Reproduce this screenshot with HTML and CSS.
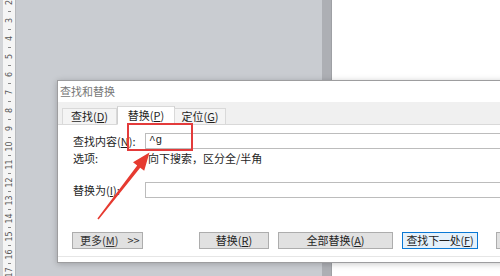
FILE: index.html
```html
<!DOCTYPE html>
<html lang="zh">
<head>
<meta charset="utf-8">
<link rel="stylesheet" href="styles.css">
</head>
<body>
<div class="screen">
  <div class="ruler-edge"></div>
  <div class="ruler">
    <div class="ruler-track">
      <span class="num">2</span><span class="tick"></span>
      <span class="num">3</span><span class="tick"></span>
      <span class="num">4</span><span class="tick"></span>
      <span class="num">5</span><span class="tick"></span>
      <span class="num">6</span><span class="tick"></span>
      <span class="num">7</span><span class="tick"></span>
      <span class="num">8</span><span class="tick"></span>
      <span class="num">9</span><span class="tick"></span>
      <span class="num">10</span><span class="tick"></span>
      <span class="num">11</span><span class="tick"></span>
      <span class="num">12</span><span class="tick"></span>
      <span class="num">13</span><span class="tick"></span>
      <span class="num">14</span><span class="tick"></span>
      <span class="num">15</span><span class="tick"></span>
      <span class="num">16</span><span class="tick"></span>
      <span class="num">17</span><span class="tick"></span>
    </div>
  </div>
  <div class="workspace"></div>
  <div class="page-shadow"></div>
  <div class="page"></div>

  <div class="dialog">
    <div class="title">查找和替换</div>
    <div class="tabstrip">
      <div class="tab tab-find">查找(<u>D</u>)</div>
      <div class="tab tab-active tab-replace">替换(<u>P</u>)</div>
      <div class="tab tab-goto">定位(<u>G</u>)</div>
    </div>
    <div class="panel">
      <div class="row row-find">
        <span class="label">查找内容(<u>N</u>):</span>
        <div class="input">^g</div>
      </div>
      <div class="row row-options">
        <span class="label">选项:</span>
        <span class="value">向下搜索，区分全/半角</span>
      </div>
      <div class="row row-replace">
        <span class="label">替换为(<u>I</u>):</span>
        <div class="input"></div>
      </div>
      <div class="buttons">
        <div class="btn btn-more"><span>更多(<u>M</u>)</span><span>&gt;&gt;</span></div>
        <div class="btn btn-replace">替换(<u>R</u>)</div>
        <div class="btn btn-all">全部替换(<u>A</u>)</div>
        <div class="btn btn-next">查找下一处(<u>F</u>)</div>
        <div class="btn btn-cancel"></div>
      </div>
    </div>
  </div>

  <div class="highlight"></div>
  <svg class="arrow" width="500" height="276" viewBox="0 0 500 276">
    <polygon points="97.4,218.6 137.2,165.4 133,162.2 149.5,152.5 144.2,170.8 140.2,167.7 98.6,219.4" fill="#e63a30"/>
  </svg>
</div>
</body>
</html>
```
FILE: styles.css
```css
html, body {
  margin: 0;
  padding: 0;
}

.screen {
  position: relative;
  width: 500px;
  height: 276px;
  display: flex;
  overflow: hidden;
  background: #c9ccd1;
  font-family: "Noto Sans CJK SC", "Liberation Sans", sans-serif;
}

.ruler-edge {
  width: 3px;
  flex-shrink: 0;
  background: #d3d5d8;
}

.ruler {
  width: 12px;
  flex-shrink: 0;
  background: #f5f5f5;
  border-right: 1px solid #b7b9bd;
  overflow: hidden;
}

.ruler-track {
  display: flex;
  flex-direction: column;
  margin-top: -2.5px;
}

.ruler-track span {
  height: 9px;
  flex-shrink: 0;
  display: flex;
  align-items: center;
  justify-content: center;
}

.ruler-track .num {
  font-family: "DejaVu Sans", sans-serif;
  font-size: 8px;
  line-height: 9px;
  color: #555555;
  transform: rotate(-90deg);
  white-space: nowrap;
}

.ruler-track .tick::before {
  content: "";
  display: block;
  width: 3px;
  height: 1px;
  background: #8a8a8a;
}

.workspace {
  width: 306px;
  flex-shrink: 0;
}

.page-shadow {
  width: 9px;
  flex-shrink: 0;
  background: #adafb4;
}

.page {
  flex: 1;
  background: #ffffff;
  border-left: 1px solid #9ea0a4;
}

/* dialog window */
.dialog {
  position: absolute;
  left: 57px;
  top: 80px;
  width: 470px;
  height: 183px;
  box-sizing: border-box;
  border: 1px solid #9d9d9f;
  background: #ffffff;
  box-shadow: 0 1px 6px rgba(0, 0, 0, 0.22);
  display: flex;
  flex-direction: column;
  font-size: 11px;
  color: #1f1f1f;
}

.title {
  height: 21px;
  line-height: 21px;
  padding-left: 2px;
  color: #777777;
  flex-shrink: 0;
}

.tabstrip {
  height: 23px;
  box-sizing: border-box;
  flex-shrink: 0;
  display: flex;
  align-items: flex-end;
  padding-left: 4px;
  background: #f0f0f0;
  border-bottom: 1px solid #d9d9d9;
}

.tab {
  box-sizing: border-box;
  height: 16px;
  line-height: 14px;
  text-align: center;
  border: 1px solid #d9d9d9;
  border-bottom: none;
  background: #f4f4f4;
  white-space: nowrap;
}

.tab-find { width: 55px; }
.tab-replace { width: 58px; }
.tab-goto { width: 52px; margin-left: -1px; }

.tab-active {
  height: 19px;
  line-height: 17px;
  margin-bottom: -1px;
  background: #ffffff;
  border-bottom: 1px solid #ffffff;
  border-left-color: #cfcfcf;
  border-right-color: #cfcfcf;
}

.panel {
  height: 132px;
  box-sizing: border-box;
  flex-shrink: 0;
  padding-left: 15px;
  border-bottom: 1px solid #e6e6e6;
  display: flex;
  flex-direction: column;
}

.row {
  display: flex;
  align-items: center;
}

.label {
  width: 72px;
  flex-shrink: 0;
  white-space: nowrap;
}

.row-find {
  margin-top: 8px;
  height: 16px;
}

.row-options {
  margin-top: 2px;
  height: 14px;
}

.row-options .value {
  padding-left: 3px;
  white-space: nowrap;
}

.row-replace {
  margin-top: 17px;
  height: 16px;
}

.input {
  flex: 1;
  height: 16px;
  box-sizing: border-box;
  border: 1px solid #bcbcbc;
  background: #ffffff;
  line-height: 13px;
  padding-left: 3px;
  font-family: "Liberation Mono", "Noto Sans CJK SC", monospace;
}

.buttons {
  margin-top: 34px;
  margin-left: -1px;
  display: flex;
}

.btn {
  flex-shrink: 0;
  box-sizing: border-box;
  height: 17px;
  line-height: 15px;
  border: 1px solid #adadad;
  background: #e1e1e1;
  text-align: center;
  white-space: nowrap;
  overflow: hidden;
}

.btn-more {
  width: 71px;
  display: flex;
  padding-left: 7px;
  gap: 9px;
  text-align: left;
  color: #333;
}

.btn-replace {
  width: 70px;
  margin-left: 56px;
}

.btn-all {
  width: 115px;
  margin-left: 9px;
}

.btn-next {
  width: 76px;
  margin-left: 9px;
  border-color: #0a78d4;
  background: #e5f1fb;
  letter-spacing: -0.2px;
}

.btn-cancel {
  width: 70px;
  margin-left: 18px;
}

/* annotation overlays */
.highlight {
  position: absolute;
  left: 127px;
  top: 123px;
  width: 66px;
  height: 28px;
  box-sizing: border-box;
  border: 2px solid #e33b3b;
}

.arrow {
  position: absolute;
  left: 0;
  top: 0;
  pointer-events: none;
}
```
